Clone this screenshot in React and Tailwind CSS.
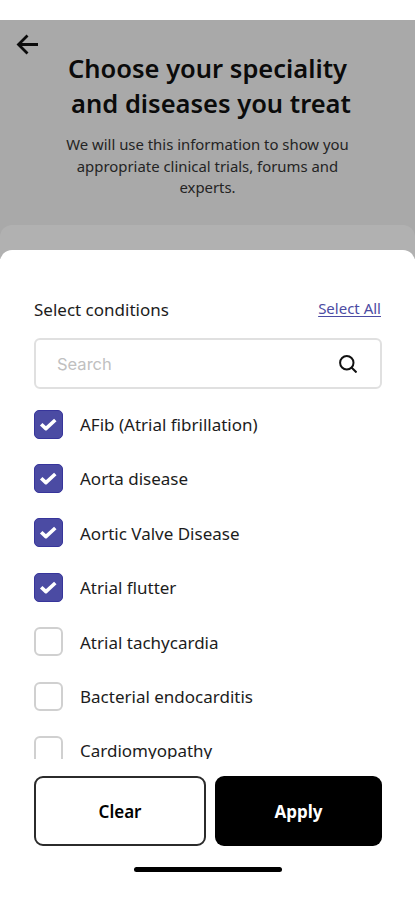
import { useState } from 'react';

const conditions = [
  'AFib (Atrial fibrillation)',
  'Aorta disease',
  'Aortic Valve Disease',
  'Atrial flutter',
  'Atrial tachycardia',
  'Bacterial endocarditis',
  'Cardiomyopathy',
];

// Single row with a checkbox and its label
const ConditionRow = ({ label, checked, onToggle }) => (
  <button
    type="button"
    role="checkbox"
    aria-checked={checked}
    onClick={onToggle}
    className="flex h-[54.4px] shrink-0 items-center gap-[17px] text-left"
  >
    {checked ? (
      <span className="flex h-[29px] w-[29px] items-center justify-center rounded-[5px] border border-[#37359b] bg-[#4b4ba3]">
        <svg className="h-[29px] w-[29px] shrink-0" fill="none" stroke="white" viewBox="0 0 29 29">
          <path strokeWidth="3.6" strokeLinejoin="round" d="M7.2 14.2l4.7 4.4 9.4-8.6" />
        </svg>
      </span>
    ) : (
      <span className="h-[29px] w-[29px] rounded-[6px] border-2 border-[#d0d0d0] bg-white" />
    )}
    <span className="pt-[1px] text-[17px] whitespace-nowrap text-[#1c1c1c]">{label}</span>
  </button>
);

const App = () => {
  const [selected, setSelected] = useState(conditions.slice(0, 4));

  const toggle = (name) => {
    setSelected((prev) =>
      prev.includes(name) ? prev.filter((item) => item !== name) : [...prev, name]
    );
  };

  return (
    <div className="flex h-[900px] w-[415px] flex-col overflow-hidden bg-white pt-5 font-['Noto_Sans',sans-serif]">
      {/* Dimmed page behind the sheet */}
      <header className="h-[205px] shrink-0 bg-[#a9a9a9] pt-[14px] text-center text-[#0b0b0b]">
        <button type="button" aria-label="Back" className="ml-4 block h-[21px] w-[23px]">
          <svg className="h-[21px] w-[23px]" fill="none" stroke="currentColor" viewBox="0 0 23 21">
            <path strokeWidth="2.8" d="M22 10.5H3M11.5 1.5l-9 9 9 9" />
          </svg>
        </button>
        <h1 className="-mt-[4px] text-[25.5px] leading-[35px] font-semibold">
          <span className="block">Choose your speciality</span>
          <span className="block pl-[7px]">and diseases you treat</span>
        </h1>
        <p className="mx-auto mt-[13px] w-[300px] text-[14.9px] leading-[21.5px] text-[#242424]">
          We will use this information to show you appropriate clinical trials, forums and experts.
        </p>
      </header>

      <div className="h-[34px] shrink-0 bg-[#a9a9a9]">
        <div className="h-full rounded-t-[12px] bg-[#b1b1b1]" />
      </div>

      {/* Bottom sheet */}
      <section className="relative -mt-[9px] flex flex-1 flex-col rounded-t-[12px] bg-white px-[34px] pt-[48px]">
        <div className="flex h-6 items-center justify-between">
          <h2 className="text-[17px] text-[#1c1c1c]">Select conditions</h2>
          <button
            type="button"
            onClick={() => setSelected(conditions)}
            className="-mt-[3px] text-[15px] text-[#4b4ba3] underline underline-offset-2"
          >
            Select All
          </button>
        </div>

        <label className="mt-4 flex h-[51px] w-[348px] shrink-0 items-center justify-between rounded-[6px] border-2 border-[#e0e0e0] pr-[23px] pl-[21px]">
          <input
            type="text"
            placeholder="Search"
            className="w-[200px] pt-[1px] font-['Inter',sans-serif] text-[16.5px] outline-none placeholder:text-[#c0c0c0]"
          />
          <svg className="h-[18px] w-[18px]" fill="none" stroke="#111" viewBox="0 0 18 18">
            <circle cx="7.8" cy="7.8" r="6.7" strokeWidth="2" />
            <path strokeWidth="2" d="M12.5 12.5l5 5" />
          </svg>
        </label>

        <div className="mt-[8px] flex h-[362px] shrink-0 flex-col overflow-hidden">
          {conditions.map((name) => (
            <ConditionRow
              key={name}
              label={name}
              checked={selected.includes(name)}
              onToggle={() => toggle(name)}
            />
          ))}
        </div>

        <div className="mt-[17px] flex h-[70px] w-[348px] shrink-0 gap-[9px]">
          <button
            type="button"
            onClick={() => setSelected([])}
            className="w-[172px] rounded-[9px] border-2 border-[#2b2b2b] pt-[2px] text-[17px] font-semibold text-black"
          >
            Clear
          </button>
          <button type="button" className="w-[167px] rounded-[9px] bg-black pt-[2px] text-[17px] font-bold text-white">
            Apply
          </button>
        </div>

        <div className="mx-auto mt-[21px] h-[5px] w-[148px] rounded-full bg-black" />
      </section>
    </div>
  );
};

export default App;
